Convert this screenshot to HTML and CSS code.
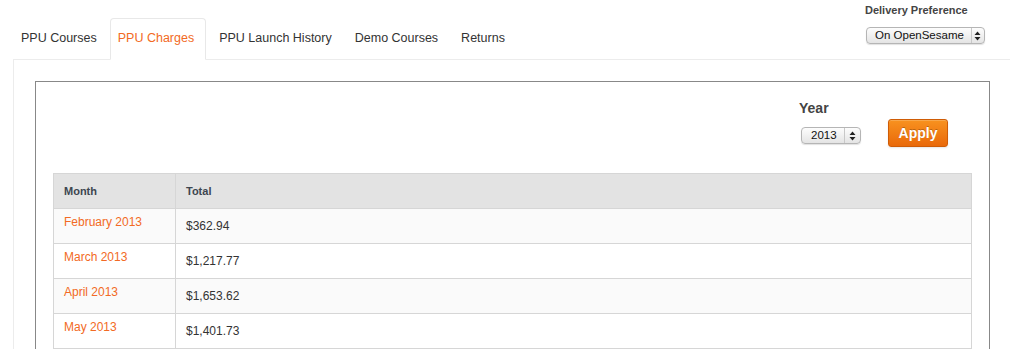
FILE: index.html
```html
<!DOCTYPE html>
<html lang="en">
<head>
    <meta charset="UTF-8">
    <title>PPU Charges</title>
    <link rel="stylesheet" href="styles.css">
</head>
<body>

    <div class="top">
        <ul class="tabs">
            <li><a href="#">PPU Courses</a></li>
            <li class="active"><a href="#">PPU Charges</a></li>
            <li><a href="#">PPU Launch History</a></li>
            <li><a href="#">Demo Courses</a></li>
            <li><a href="#">Returns</a></li>
        </ul>
        <div class="delivery">
            <div class="delivery-label">Delivery Preference</div>
            <div class="select select-wide">
                <span class="select-value">On OpenSesame</span>
                <span class="select-arrows">
                    <svg width="7" height="10" viewBox="0 0 7 10"><path d="M3.5 0.5 L6.5 4 L0.5 4 Z M3.5 9.5 L6.5 6 L0.5 6 Z" fill="#222"/></svg>
                </span>
            </div>
        </div>
    </div>

    <div class="tab-content">
        <div class="charges-box">
            <div class="filter">
                <div class="year-group">
                    <div class="year-label">Year</div>
                    <div class="select select-year">
                        <span class="select-value">2013</span>
                        <span class="select-arrows">
                            <svg width="7" height="10" viewBox="0 0 7 10"><path d="M3.5 0.5 L6.5 4 L0.5 4 Z M3.5 9.5 L6.5 6 L0.5 6 Z" fill="#222"/></svg>
                        </span>
                    </div>
                </div>
                <button class="apply">Apply</button>
            </div>

            <table class="charges">
                <thead>
                    <tr>
                        <th class="col-month">Month</th>
                        <th>Total</th>
                    </tr>
                </thead>
                <tbody>
                    <tr>
                        <td class="month"><a href="#">February 2013</a></td>
                        <td>$362.94</td>
                    </tr>
                    <tr>
                        <td class="month"><a href="#">March 2013</a></td>
                        <td>$1,217.77</td>
                    </tr>
                    <tr>
                        <td class="month"><a href="#">April 2013</a></td>
                        <td>$1,653.62</td>
                    </tr>
                    <tr>
                        <td class="month"><a href="#">May 2013</a></td>
                        <td>$1,401.73</td>
                    </tr>
                </tbody>
            </table>
        </div>
    </div>

</body>
</html>
```

FILE: styles.css
```css
body {
    font-family: "Liberation Sans", Arial, sans-serif;
    color: #333;
    margin: 0;
    overflow: hidden;
}
a {
    text-decoration: none;
}
.top {
    display: flex;
    justify-content: space-between;
    align-items: flex-start;
    margin-left: 13px;
    padding-top: 18px;
    border-bottom: 1px solid #ececec;
}
.tabs {
    list-style: none;
    display: flex;
    margin: 0 0 -1px -2px;
    padding: 0;
}
.tabs li {
    margin-right: 3px;
}
.tabs a {
    display: block;
    padding: 9px 9px 11px 9px;
    line-height: 20px;
    font-size: 12.5px;
    color: #333;
    border: 1px solid transparent;
    border-radius: 4px 4px 0 0;
}
.tabs .active a {
    color: #f26a24;
    background-color: #fff;
    border-color: #e8e8e8 #e8e8e8 transparent;
    padding-left: 7px;
    padding-right: 11px;
}
.delivery {
    margin-top: -15px;
    margin-right: 25px;
}
.delivery-label {
    font-size: 11px;
    font-weight: bold;
    color: #444;
    line-height: 14px;
    margin-bottom: 8px;
    margin-left: -1px;
}
.select {
    display: inline-flex;
    align-items: center;
    height: 17px;
    box-sizing: border-box;
    border: 1px solid #b5b5b5;
    border-radius: 4px;
    background: linear-gradient(#fdfdfd, #e4e4e4);
    box-shadow: 0 1px 1px rgba(0, 0, 0, 0.12);
    font-size: 11.5px;
    color: #111;
    white-space: nowrap;
}
.select-value {
    padding: 0 7px 0 8px;
    line-height: 15px;
}
.select-arrows {
    display: flex;
    align-items: center;
    justify-content: center;
    align-self: stretch;
    width: 18px;
    border-left: 1px solid #c8c8c8;
}
.select-wide {
    width: 119px;
}
.select-wide .select-value {
    flex-grow: 1;
}
.tab-content {
    margin-left: 13px;
    border-left: 1px solid #ececec;
    padding: 21px 20px 0 21px;
}
.charges-box {
    border: 1px solid #888;
    border-bottom: none;
    padding: 0 17px 0 17px;
    height: 280px;
}
.filter {
    display: flex;
    justify-content: flex-end;
    align-items: flex-start;
    padding-top: 18px;
    margin-right: 24px;
}
.year-group {
    margin-right: 27px;
}
.year-label {
    font-size: 14px;
    font-weight: bold;
    color: #444;
    line-height: 16px;
    margin-left: -2px;
    margin-bottom: 9px;
}
.select-year {
    width: 60px;
}
.select-year .select-value {
    padding: 0 7px 0 9px;
}
.apply {
    margin-top: 19px;
    width: 60px;
    height: 28px;
    padding: 0;
    border: 1px solid #cf5c06;
    border-radius: 3px;
    background: linear-gradient(#f8921f, #e9690a);
    color: #fff;
    font-family: "Liberation Sans", Arial, sans-serif;
    font-size: 14px;
    font-weight: bold;
    text-shadow: 0 -1px 0 rgba(0, 0, 0, 0.25);
    box-shadow: inset 0 1px 0 rgba(255, 255, 255, 0.2), 0 1px 2px rgba(0, 0, 0, 0.1);
}
.charges {
    width: 100%;
    margin-top: 26px;
    border-collapse: collapse;
    font-size: 12px;
}
.charges th,
.charges td {
    border: 1px solid #d6d6d6;
    padding: 0 10px;
    height: 34px;
    text-align: left;
}
.charges th {
    background-color: #e3e3e3;
    font-size: 11px;
    color: #3d4650;
}
.col-month {
    width: 101px;
}
.charges tbody tr:nth-child(odd) {
    background-color: #fafafa;
}
.charges td.month {
    vertical-align: top;
    padding-top: 6px;
    height: 28px;
}
.month a {
    color: #f26a24;
}
```
